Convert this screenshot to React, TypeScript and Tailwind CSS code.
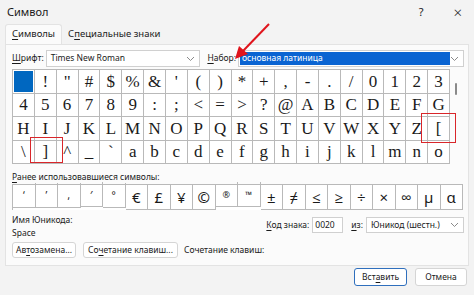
import React from 'react';

const ui = { fontFamily: '"Segoe UI", "Noto Sans", "Open Sans", sans-serif' };
const serif = { fontFamily: '"Liberation Serif", "Times New Roman", serif' };

const rows: string[][] = [
  ['', '!', '"', '#', '$', '%', '&', "'", '(', ')', '*', '+', ',', '-', '.', '/', '0', '1', '2', '3'],
  ['4', '5', '6', '7', '8', '9', ':', ';', '<', '=', '>', '?', '@', 'A', 'B', 'C', 'D', 'E', 'F', 'G'],
  ['H', 'I', 'J', 'K', 'L', 'M', 'N', 'O', 'P', 'Q', 'R', 'S', 'T', 'U', 'V', 'W', 'X', 'Y', 'Z', '['],
  ['\\', ']', '^', '_', '`', 'a', 'b', 'c', 'd', 'e', 'f', 'g', 'h', 'i', 'j', 'k', 'l', 'm', 'n', 'o'],
];

const recent = ['\u2018', '\u2019', '\u201a', '\u2032', '\u00b0', '€', '£', '¥', '©', '®', '™', '±', '≠', '≤', '≥', '÷', '×', '∞', 'µ', 'α'];

const Chevron = () => (
  <svg width="9" height="6" viewBox="0 0 9 6" className="shrink-0">
    <path d="M1 1l3.5 3.5L8 1" fill="none" stroke="#8a8a8a" strokeWidth="1" />
  </svg>
);

const U = ({ children }: { children: React.ReactNode }) => <span className="underline underline-offset-2">{children}</span>;

export default function App() {
  return (
    <div className="relative w-[474px] h-[295px] bg-[#f3f3f3] text-[#1a1a1a] overflow-hidden whitespace-nowrap" style={ui}>
      {/* title bar */}
      <div className="h-[24px] flex items-center pl-[7px] text-[11px]">
        <span>Символ</span>
        <span className="ml-auto mr-[30px] text-[11px]">?</span>
        <span className="mr-[12px] text-[15px] font-light leading-none">×</span>
      </div>

      {/* tabs */}
      <div className="h-[20px] flex items-end pl-[5px] text-[9.5px]">
        <div className="h-[20px] px-[6px] flex items-center bg-[#fbfbfb] border border-b-0 border-[#e3e3e3] rounded-t-[3px]">
          <U>С</U>имволы
        </div>
        <div className="h-[20px] px-[6px] flex items-center">
          С<U>п</U>ециальные знаки
        </div>
      </div>

      {/* panel */}
      <div className="mx-[5px] h-[222px] bg-[#fbfbfb] border border-[#e3e3e3] pl-[6px] pr-[4px] pt-[5px] text-[8.5px]">
        <div className="flex items-center h-[17px]">
          <span className="mr-[2px]"><U>Ш</U>рифт:</span>
          <div className="w-[157px] h-[17px] bg-white border border-[#d0d0d0] flex items-center pl-[4px] pr-[4px]">
            <span>Times New Roman</span>
            <span className="ml-auto"><Chevron /></span>
          </div>
          <span className="ml-[7px] mr-[2px]"><U>Н</U>абор:</span>
          <div className="flex-1 h-[17px] bg-white border border-[#d0d0d0] flex items-center pl-[1px] pr-[4px]">
            <span className="w-[210px] h-[13px] bg-[#0a64d2] text-white flex items-center pl-[2px]">основная латиница</span>
            <span className="ml-auto"><Chevron /></span>
          </div>
        </div>

        <div className="mt-[2px] flex">
          <div className="grid grid-cols-20 w-[438px] border-t border-l border-[#b9b9b9] bg-white" style={serif}>
            {rows.flat().map((c, i) => (
              <div key={i} className="h-[23.5px] border-r border-b border-[#b9b9b9] flex items-center justify-center text-[17px] leading-none">
                {i === 0 ? <div className="w-full h-full bg-[#0067c0] border border-white" /> : c}
              </div>
            ))}
          </div>
          <div className="w-[12px] relative">
            <div className="absolute left-[5px] top-[14px] w-[2px] h-[12px] bg-[#8a8a8a] rounded" />
          </div>
        </div>

        <div className="mt-[6px] h-[14px] flex items-center">
          <span><U>Р</U>анее использовавшиеся символы:</span>
        </div>
        <div className="grid grid-cols-20 w-[451px] border-t border-l border-[#b9b9b9] bg-white">
          {recent.map((c, i) => (
            <div key={i} className={`h-[25px] border-r border-b border-[#b9b9b9] flex items-center justify-center leading-none ${i >= 5 && i <= 8 ? 'text-[15px]' : i === 9 || i === 10 ? 'text-[9px] -translate-y-[3px]' : i === 3 ? 'text-[11px] -translate-y-[3px]' : i < 5 ? 'text-[10px] -translate-y-[2px]' : 'text-[15px]'}`}>
              {c}
            </div>
          ))}
        </div>

        <div className="mt-[4px] flex items-start">
          <div className="flex flex-col">
            <span className="h-[13px] flex items-center">Имя Юникода:</span>
            <span className="h-[13px] flex items-center">Space</span>
          </div>
          <div className="ml-auto flex items-center mt-[3px]">
            <span className="mr-[3px]"><U>К</U>од знака:</span>
            <div className="w-[31px] h-[16px] bg-white border border-[#d0d0d0] flex items-center pl-[2px]">0020</div>
            <span className="ml-[8px] mr-[3px]"><U>и</U>з:</span>
            <div className="w-[98px] h-[16px] bg-white border border-[#d0d0d0] flex items-center pl-[4px] pr-[4px]">
              <span>Юникод (шестн.)</span>
              <span className="ml-auto"><Chevron /></span>
            </div>
          </div>
        </div>

        <div className="mt-[2px] flex items-center">
          <div className="w-[64px] h-[16px] bg-white border border-[#d5d5d5] rounded-[3px] flex items-center justify-center">
            <span>Ав<U>т</U>озамена...</span>
          </div>
          <div className="ml-[7px] w-[95px] h-[16px] bg-white border border-[#d5d5d5] rounded-[3px] flex items-center justify-center">
            <span>Со<U>ч</U>етание клавиш...</span>
          </div>
          <span className="ml-[6px]">Сочетание клавиш:</span>
        </div>
      </div>

      {/* footer */}
      <div className="flex justify-end gap-[8px] pr-[7px] mt-[2px] text-[8.5px]">
        <div className="w-[53px] h-[18px] bg-white border border-[#2f6fbd] rounded-[3px] flex items-center justify-center">
          <span>Вст<U>а</U>вить</span>
        </div>
        <div className="w-[52px] h-[18px] bg-white border border-[#d5d5d5] rounded-[3px] flex items-center justify-center">
          Отмена
        </div>
      </div>

      {/* annotations */}
      <div className="absolute left-[30px] top-[137px] w-[33px] h-[26px] border-[1.5px] border-[#d9262a]" />
      <div className="absolute left-[421px] top-[113px] w-[35px] h-[30px] border-[1.5px] border-[#d9262a]" />
      <svg className="absolute left-0 top-0" width="474" height="295">
        <line x1="269" y1="24" x2="243" y2="51" stroke="#e0141c" strokeWidth="2" />
        <polygon points="235,59 239,46 248,54" fill="#e0141c" />
      </svg>
    </div>
  );
}
